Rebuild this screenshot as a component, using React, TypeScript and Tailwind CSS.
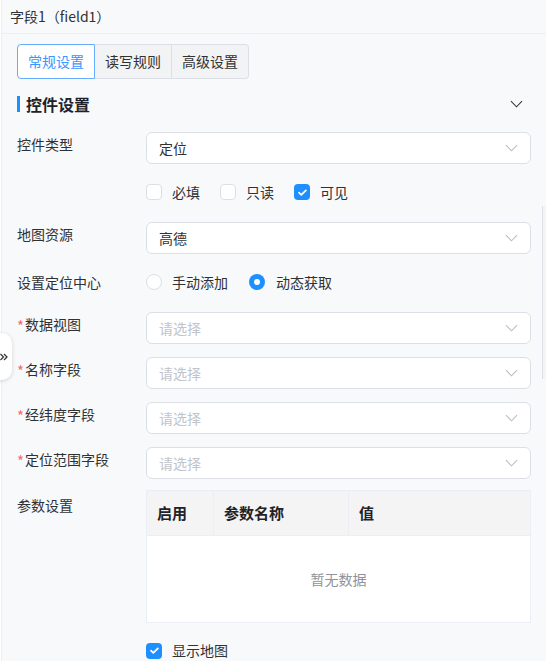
import React from "react";

const font = { fontFamily: '"Noto Sans CJK SC", "Noto Sans", sans-serif' };

function Chevron({ className }: { className?: string }) {
  return (
    <svg viewBox="0 0 14 8" className={className} fill="none">
      <path d="M1 1l6 6 6-6" stroke="currentColor" strokeWidth="1.1" />
    </svg>
  );
}

function Select({ value, placeholder }: { value?: string; placeholder?: string }) {
  return (
    <div className="flex h-8 flex-1 items-center justify-between rounded-md border border-[#dcdfe6] bg-white pl-3 pr-3">
      <span className={value ? "text-[14px] leading-[20px] text-[#303133]" : "text-[14px] leading-[20px] text-[#c0c4cc]"}>
        {value ?? placeholder}
      </span>
      <Chevron className="h-[8px] w-[13px] text-[#b8bcc4]" />
    </div>
  );
}

function Check({ checked, className }: { checked?: boolean; className?: string }) {
  return checked ? (
    <span className={`flex h-4 w-4 shrink-0 items-center justify-center rounded-[4px] bg-[#1e8fff] ${className ?? ""}`}>
      <svg viewBox="0 0 12 12" className="h-[11px] w-[11px]" fill="none">
        <path d="M2.2 6.2l2.5 2.4 5-5" stroke="white" strokeWidth="1.9" strokeLinecap="round" strokeLinejoin="round" />
      </svg>
    </span>
  ) : (
    <span className={`block h-4 w-4 shrink-0 rounded-[4px] border border-[#dcdfe6] bg-white ${className ?? ""}`} />
  );
}

function Radio({ checked, className }: { checked?: boolean; className?: string }) {
  return checked ? (
    <span className={`flex h-4 w-4 shrink-0 items-center justify-center rounded-full bg-[#1e8fff] ${className ?? ""}`}>
      <span className="h-[6px] w-[6px] rounded-full bg-white" />
    </span>
  ) : (
    <span className={`block h-4 w-4 shrink-0 rounded-full border border-[#dcdfe6] bg-white ${className ?? ""}`} />
  );
}

function Label({ text, required }: { text: string; required?: boolean }) {
  return (
    <div className="flex w-[129px] shrink-0 items-start pt-[1px] text-[14px] leading-[22px] text-[#303133]">
      {required && (
        <span className="mr-[1px] mt-[5px] text-[15px] leading-[15px] text-[#f56c6c]">*</span>
      )}
      <span>{text}</span>
    </div>
  );
}

export default function App() {
  return (
    <div style={font} className="relative h-[661px] w-[546px] overflow-hidden bg-white">
      <div className="ml-px h-full border-l border-[#eceef2] bg-[#f8f9fb]">
        <div className="flex h-[34px] items-center border-b border-[#eceef2] pl-[8px] text-[14px] text-[#303133]">
          字段1（field1）
        </div>

        <div className="pl-[15px] pr-[15px]">
          <div className="mt-[10px] flex h-[35px] w-[233px] text-[14px]">
            <div className="flex w-[78px] items-center justify-center rounded-l-[4px] border border-[#66adff] bg-white text-[#3b95ff]">
              常规设置
            </div>
            <div className="flex w-[77px] items-center justify-center border-y border-r border-[#dcdfe6] bg-[#f2f3f5] text-[#303133]">
              读写规则
            </div>
            <div className="flex w-[77px] items-center justify-center rounded-r-[4px] border-y border-r border-[#dcdfe6] bg-[#f2f3f5] text-[#303133]">
              高级设置
            </div>
          </div>

          <div className="mt-[13px] flex h-[24px] items-center justify-between">
            <div className="flex items-center">
              <span className="h-[16px] w-[3px] bg-[#1e8fff]" />
              <span className="ml-[6px] text-[16px] font-bold text-[#1f2329]">控件设置</span>
            </div>
            <Chevron className="mr-[8px] h-[8px] w-[13px] text-[#303133]" />
          </div>

          <div className="mt-[16px] flex">
            <Label text="控件类型" />
            <Select value="定位" />
          </div>

          <div className="ml-[129px] mt-[12px] flex h-8 items-center text-[14px] text-[#303133]">
            <Check />
            <span className="ml-[10px]">必填</span>
            <Check className="ml-[20px]" />
            <span className="ml-[10px]">只读</span>
            <Check checked className="ml-[20px]" />
            <span className="ml-[10px]">可见</span>
          </div>

          <div className="mt-[14px] flex">
            <Label text="地图资源" />
            <Select value="高德" />
          </div>

          <div className="mt-[12px] flex h-8 items-center">
            <div className="w-[129px] shrink-0 text-[14px] text-[#303133]">设置定位中心</div>
            <Radio />
            <span className="ml-[10px] text-[14px] text-[#303133]">手动添加</span>
            <Radio checked className="ml-[21px]" />
            <span className="ml-[11px] text-[14px] text-[#303133]">动态获取</span>
          </div>

          <div className="mt-[14px] flex">
            <Label text="数据视图" required />
            <Select placeholder="请选择" />
          </div>
          <div className="mt-[13px] flex">
            <Label text="名称字段" required />
            <Select placeholder="请选择" />
          </div>
          <div className="mt-[13px] flex">
            <Label text="经纬度字段" required />
            <Select placeholder="请选择" />
          </div>
          <div className="mt-[13px] flex">
            <Label text="定位范围字段" required />
            <Select placeholder="请选择" />
          </div>

          <div className="mt-[11px] flex">
            <div className="w-[129px] shrink-0 pt-[4px] text-[14px] leading-[22px] text-[#303133]">参数设置</div>
            <div className="flex-1 border border-[#ebeef5]">
              <div className="flex h-[44px] bg-[#f4f4f5] text-[15px] font-bold text-[#1f2329]">
                <div className="flex w-[67px] items-center border-r border-[#ebeef5] pl-[10px]">启用</div>
                <div className="flex w-[135px] items-center border-r border-[#ebeef5] pl-[10px]">参数名称</div>
                <div className="flex flex-1 items-center pl-[10px]">值</div>
              </div>
              <div className="flex h-[87px] items-center justify-center border-t border-[#ebeef5] bg-white text-[14px] text-[#909399]">
                暂无数据
              </div>
            </div>
          </div>

          <div className="ml-[129px] mt-[17px] flex items-center text-[14px] text-[#303133]">
            <Check checked />
            <span className="ml-[10px]">显示地图</span>
          </div>
        </div>
      </div>

      {/* collapse handle on the left edge */}
      <div className="absolute left-[-10px] top-[333px] flex h-[47px] w-[22px] items-center justify-end rounded-[10px] bg-white pr-[3px] shadow-[0_1px_4px_rgba(0,0,0,0.15)]">
        <svg viewBox="0 0 10 10" className="h-[10px] w-[10px]" fill="none">
          <path d="M1.5 2l3 3-3 3M5 2l3 3-3 3" stroke="#303133" strokeWidth="1.2" />
        </svg>
      </div>

      {/* scrollbar thumb */}
      <div className="absolute right-0 top-[206px] h-[173px] w-[4px] border-l border-[#dcdfe6] bg-[#f3f4f6]" />
    </div>
  );
}
